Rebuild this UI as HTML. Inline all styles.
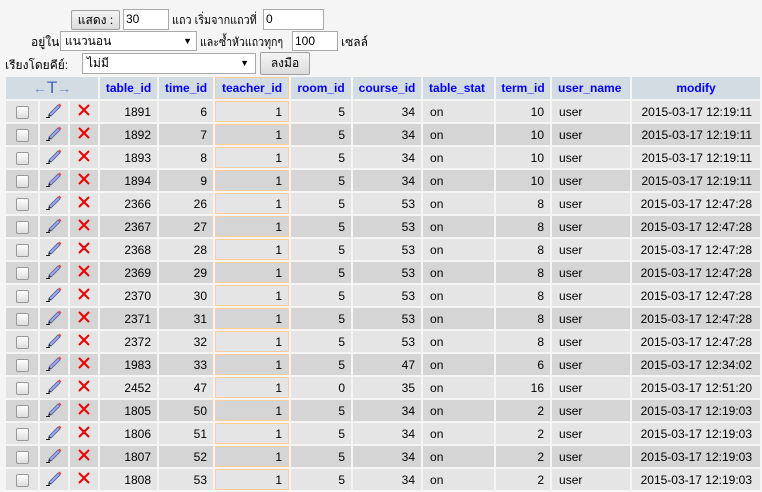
<!DOCTYPE html>
<html><head><meta charset="utf-8"><style>
body{margin:0;background:#f5f5f5;font-family:"Liberation Sans","Noto Sans CJK SC",sans-serif;font-size:12px;color:#000;width:762px;height:492px;overflow:hidden;position:relative}
.a{position:absolute;white-space:nowrap;transform-origin:0 50%}
.btn{position:absolute;border:1px solid #a0a0a0;background:linear-gradient(#f4f4f4,#dcdcdc);border-radius:2px;text-align:center;box-sizing:border-box;font-size:12px}
.inp{position:absolute;border:1px solid #a9a9a9;background:#fff;box-sizing:border-box;padding-left:2px;font-size:12px}
table{position:absolute;left:4px;top:75px;border-collapse:separate;border-spacing:2px;table-layout:fixed;width:758px}
td,th{box-sizing:border-box;padding:0 6px;height:21px;font-size:12px;white-space:nowrap;overflow:hidden}
th{background:#d3dce3;color:#00f;font-weight:bold;height:22px;padding:0 3px}
tr.o td{background:#e5e5e5}tr.e td{background:#d5d5d5}
td.r{text-align:right}
td.l{padding-left:7px}
td.t,th.t{border:1px solid #ffcc99}
.cb{display:inline-block;width:11px;height:11px;border:1px solid #999;border-radius:2px;background:linear-gradient(#fff,#ddd);vertical-align:middle}
</style></head><body>
<div class="btn" style="left:71px;top:10px;width:49px;height:20px;line-height:18px">แสดง :</div>
<div class="inp" style="left:123px;top:9px;width:46px;height:21px;line-height:19px">30</div>
<div class="a" style="left:172px;top:11px;transform:scaleX(0.9)">แถว เริ่มจากแถวที่</div>
<div class="inp" style="left:263px;top:9px;width:61px;height:21px;line-height:19px">0</div>
<div class="a" style="left:31px;top:33px">อยู่ใน</div>
<div class="inp" style="left:60px;top:31px;width:137px;height:20px;line-height:18px;padding-left:4px">แนวนอน<span style="position:absolute;right:4px;font-size:9px">▼</span></div>
<div class="a" style="left:200px;top:33px;transform:scaleX(0.88)">และซ้ำหัวแถวทุกๆ</div>
<div class="inp" style="left:292px;top:31px;width:46px;height:20px;line-height:18px">100</div>
<div class="a" style="left:341px;top:33px">เซลล์</div>
<div class="a" style="left:5px;top:56px">เรียงโดยคีย์:</div>
<div class="inp" style="left:82px;top:53px;width:174px;height:21px;line-height:19px;padding-left:4px">ไม่มี<span style="position:absolute;right:6px;font-size:9px">▼</span></div>
<div class="btn" style="left:260px;top:52px;width:50px;height:23px;line-height:21px">ลงมือ</div>
<table>
<colgroup><col style="width:32px"><col style="width:28px"><col style="width:28px"><col style="width:57px"><col style="width:54px"><col style="width:74px"><col style="width:60px"><col style="width:68px"><col style="width:71px"><col style="width:54px"><col style="width:78px"><col style="width:128px"></colgroup>
<tbody>
<tr><th colspan="3" style="color:#6a8cc8;font-weight:normal;font-size:14px">←<span style="color:#4466bb;font-size:17px">T</span>→</th><th>table_id</th><th>time_id</th><th class="t">teacher_id</th><th>room_id</th><th>course_id</th><th style="text-align:left;padding-left:6px">table_stat</th><th>term_id</th><th style="text-align:left;padding-left:6px">user_name</th><th>modify</th></tr>
</tbody>
</table>
<script>
var d=[[1891,6,1,5,34,10,'2015-03-17 12:19:11'],[1892,7,1,5,34,10,'2015-03-17 12:19:11'],[1893,8,1,5,34,10,'2015-03-17 12:19:11'],[1894,9,1,5,34,10,'2015-03-17 12:19:11'],[2366,26,1,5,53,8,'2015-03-17 12:47:28'],[2367,27,1,5,53,8,'2015-03-17 12:47:28'],[2368,28,1,5,53,8,'2015-03-17 12:47:28'],[2369,29,1,5,53,8,'2015-03-17 12:47:28'],[2370,30,1,5,53,8,'2015-03-17 12:47:28'],[2371,31,1,5,53,8,'2015-03-17 12:47:28'],[2372,32,1,5,53,8,'2015-03-17 12:47:28'],[1983,33,1,5,47,6,'2015-03-17 12:34:02'],[2452,47,1,0,35,16,'2015-03-17 12:51:20'],[1805,50,1,5,34,2,'2015-03-17 12:19:03'],[1806,51,1,5,34,2,'2015-03-17 12:19:03'],[1807,52,1,5,34,2,'2015-03-17 12:19:03'],[1808,53,1,5,34,2,'2015-03-17 12:19:03']];
var pen='<svg width="18" height="16" viewBox="0 0 18 16"><path d="M4 12 L13 3 L15 5 L6 14 Z" fill="#9aa6e8" stroke="#55609a" stroke-width="0.8"/><path d="M13 3 L14.5 1.5 L16.5 3.5 L15 5 Z" fill="#e05050"/><path d="M4 12 L3 15 L6 14 Z" fill="#222"/><path d="M1 15.5 H5" stroke="#222"/></svg>';
var x='<svg width="14" height="14" viewBox="0 0 14 14"><path d="M2 2 L12 12 M12 2 L2 12" stroke="#e00" stroke-width="2"/></svg>';
var h='';d.forEach(function(r,i){h+='<tr class="'+(i%2?'e':'o')+'"><td style="text-align:center;padding:0"><span class="cb"></span></td><td style="text-align:center;padding:0">'+pen+'</td><td style="text-align:center;padding:0">'+x+'</td><td class="r">'+r[0]+'</td><td class="r">'+r[1]+'</td><td class="r t">'+r[2]+'</td><td class="r">'+r[3]+'</td><td class="r">'+r[4]+'</td><td class="l">on</td><td class="r">'+r[5]+'</td><td class="l">user</td><td class="r" style="padding-right:8px">'+r[6]+'</td></tr>';});
document.querySelector('table tbody').insertAdjacentHTML('beforeend',h);
</script>
</body></html>
